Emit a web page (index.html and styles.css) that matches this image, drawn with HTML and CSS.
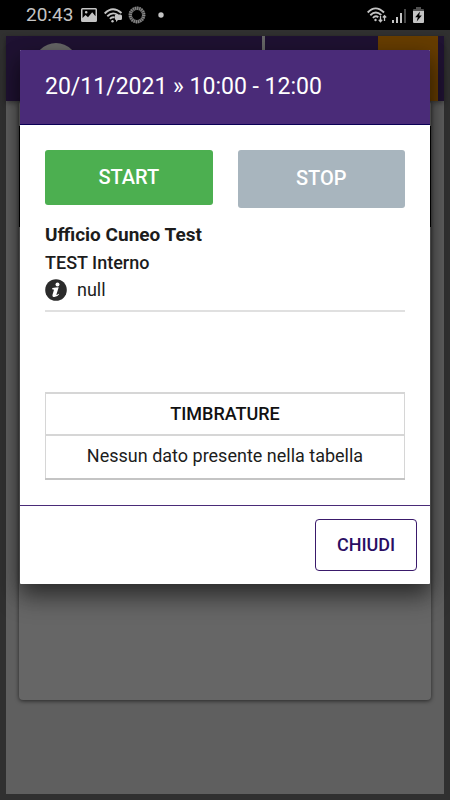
FILE: index.html
```html
<!DOCTYPE html>
<html lang="it">
<head>
<meta charset="utf-8">
<meta name="viewport" content="width=device-width, initial-scale=1">
<title>Timbrature</title>
<link rel="stylesheet" href="styles.css">
</head>
<body>
<header class="status">
  <span class="clock">20:43</span>
  <svg class="icon picture" viewBox="0 0 16 14" width="16" height="14" aria-hidden="true">
    <path fill="#c4c4c4" fill-rule="evenodd" d="M1.500 0h13Q16 0 16 1.500v11q0 1.500-1.500 1.500h-13Q0 14 0 12.500v-11Q0 0 1.500 0zM1.500 1.500v8.500l3-3 2.500 2.200 4.200-5 3.300 4V1.500zM5.200 3a1.300 1.300 0 1 1 0 2.600 1.300 1.300 0 0 1 0-2.600z"/>
  </svg>
  <svg class="icon wifi" viewBox="0 0 19 15" width="19" height="15" aria-hidden="true">
    <g fill="none" stroke="#c4c4c4" stroke-width="1.900">
      <path d="M.7 5.500Q8.500-2.800 17.500 5"/>
      <path d="M3.300 8.200q5.200-5 10.500-1.200"/>
      <path d="M5.900 10.900q2.300-2.500 4.700-1.400"/>
    </g>
    <circle cx="8.500" cy="13.200" r="1.200" fill="#c4c4c4"/>
    <path fill="#c4c4c4" d="M12 6.500h4.500q1.500 0 1.500 1.500v2.500q0 1.500-1.500 1.500H14l-2 2v-2q-1.200-.2-1.200-1.500V8q0-1.500 1.200-1.500z"/>
  </svg>
  <svg class="icon ring" viewBox="0 0 18 18" width="18" height="18" aria-hidden="true">
    <circle cx="9" cy="9" r="6.700" fill="none" stroke="#454545" stroke-width="3.400"/>
    <circle cx="9" cy="9" r="6.700" fill="none" stroke="#8c8c8c" stroke-width="3.400" stroke-dasharray="1 1.105"/>
  </svg>
  <svg class="icon dot" viewBox="0 0 6 6" width="6" height="6" aria-hidden="true"><circle cx="3" cy="3" r="2.700" fill="#c4c4c4"/></svg>
  <svg class="icon network" viewBox="0 0 20 16" width="20" height="16" aria-hidden="true">
    <g fill="none" stroke="#c4c4c4" stroke-width="1.900">
      <path d="M.7 5.500Q8.500-2.800 17 5.500"/>
      <path d="M3.300 8.200q5.300-5.200 11-.2"/>
      <path d="M5.900 10.900q2.700-2.800 5.400-.6"/>
    </g>
    <circle cx="8.500" cy="13" r="1.200" fill="#c4c4c4"/>
    <path d="M13.500 9v5.500M11.800 12.800l1.700 1.900 1.700-1.900M17.500 14V8.800M15.800 10.500l1.700-1.900 1.700 1.900" fill="none" stroke="#c4c4c4" stroke-width="1.300"/>
  </svg>
  <svg class="icon signal" viewBox="0 0 14 15" width="14" height="15" aria-hidden="true">
    <path fill="#c4c4c4" d="M0 12h2v3H0zM4 9h2v6H4zM8 5h2v10H8z"/><path fill="#484848" d="M12 1h2v14h-2z"/>
  </svg>
  <svg class="icon battery" viewBox="0 0 11 16" width="11" height="16" aria-hidden="true">
    <path fill="#505050" d="M3 0h5v2h2q1 0 1 1v2H0V3q0-1 1-1h2z"/><path fill="#c4c4c4" d="M0 4h11v11q0 1-1 1H1q-1 0-1-1z"/>
    <path fill="#000" d="M7 4.500 2.200 10.200h2.600L3.700 14.500 8.800 8.500H6.200z"/>
  </svg>
</header>
<div class="screen">
  <div class="page">
    <div class="topbar">
      <span class="avatar"></span>
      <span class="divider"></span>
      <span class="accent"></span>
    </div>
    <div class="card"><div class="card-head"></div></div>
  </div>
  <section class="dialog" role="dialog" aria-labelledby="title">
    <h1 class="title" id="title">20/11/2021 » 10:00 - 12:00</h1>
    <div class="content">
      <div class="actions">
        <button class="action start" type="button">START</button>
        <button class="action stop" type="button">STOP</button>
      </div>
      <h2 class="office">Ufficio Cuneo Test</h2>
      <p class="kind">TEST Interno</p>
      <p class="note">
        <svg viewBox="0 0 22 22" width="22" height="22" aria-hidden="true">
          <circle cx="11" cy="11" r="10.800" fill="#2b2b2b"/>
          <circle cx="12.500" cy="5.400" r="2" fill="#fff"/>
          <path fill="#fff" d="M7.400 9.100q3.500-.5 6.300-.8l-2.200 7q-.2.900.4.700.7-.3 1.500-1.300l.7.500q-1.900 2.900-4.700 2.900-2.400-.2-1.900-2.400l1.300-4.300q.3-.9-.4-1l-1.400-.1z"/>
        </svg>
        <span>null</span>
      </p>
      <table class="stamps">
        <thead><tr><th scope="col">TIMBRATURE</th></tr></thead>
        <tbody><tr><td>Nessun dato presente nella tabella</td></tr></tbody>
      </table>
    </div>
    <footer class="footer"><button class="close" type="button">CHIUDI</button></footer>
  </section>
</div>
</body>
</html>
```
FILE: styles.css
```css
* { box-sizing: border-box; }
body {
  margin: 0;
  min-height: 100vh;
  display: flex;
  flex-direction: column;
  background: #303030;
  color: #1c1c1c;
  font-family: Roboto, "Liberation Sans", sans-serif;
}
h1, h2, p { margin: 0; }

.status {
  display: flex;
  align-items: center;
  height: 30px;
  padding: 0 26px;
  background: #000;
}
.clock { color: #c4c4c4; font-size: 19px; line-height: 30px; }
.icon { flex: none; }
.picture { margin-left: 8px; }
.wifi { margin-left: 7px; }
.ring { margin-left: 5px; }
.dot { margin-left: 12px; }
.network { margin-left: auto; }
.signal { margin-left: 5px; }
.battery { margin-left: 7px; }

.screen {
  position: relative;
  flex: 1;
  display: flex;
  padding: 6px;
}
.page {
  flex: 1;
  display: flex;
  flex-direction: column;
  background: #5f5f5f;
}
.topbar {
  display: flex;
  height: 65px;
  padding: 0 6px 0 28px;
  background: #1f1232;
  box-shadow: 0 2px 5px rgba(0, 0, 0, 0.4);
}
.avatar {
  width: 44px;
  height: 44px;
  margin-top: 7px;
  border-radius: 50%;
  background: #666;
}
.divider { width: 3px; margin-left: auto; background: #666; }
.accent { width: 60px; margin-left: 113px; background: #663d00; }
.card {
  flex: 1;
  margin: 0 13px 94px;
  overflow: hidden;
  border-radius: 4px;
  background: #666;
  box-shadow: 0 1px 4px rgba(0, 0, 0, 0.6);
}
.card-head { height: 101px; margin-top: 25px; background: #000; }

.dialog {
  position: absolute;
  top: 20px;
  left: 20px;
  right: 20px;
  border-radius: 1px;
  overflow: hidden;
  background: #fff;
  box-shadow: 0 14px 24px rgba(0, 0, 0, 0.4), 0 6px 20px rgba(0, 0, 0, 0.3);
}
.title {
  padding: 21px 25px;
  border-bottom: 1px solid #0b0055;
  background: #4a2b78;
  color: #fff;
  font-size: 23px;
  font-weight: 400;
  line-height: 32px;
}
.content { padding: 25px; }
.actions {
  display: grid;
  grid-template-columns: 1fr 1fr;
  gap: 25px;
  align-items: start;
}
.action {
  height: 55px;
  padding: 0 6px 2px;
  border: 0;
  border-radius: 3px;
  color: #fff;
  font: 500 20px/28px Roboto, "Liberation Sans", sans-serif;
}
.start { background: #4caf50; }
.stop { height: 58px; background: #a8b5be; }
.office { margin-top: 13px; font-size: 19px; font-weight: 700; line-height: 28px; }
.kind { font-size: 18px; font-weight: 500; line-height: 28px; }
.note {
  display: flex;
  align-items: center;
  gap: 10px;
  height: 35px;
  padding-bottom: 8px;
  border-bottom: 2px solid #e0e0e0;
  font-size: 18px;
}
.stamps {
  width: 100%;
  margin-top: 80px;
  border-collapse: collapse;
  border: 1px solid #d6d6d6;
  border-top-width: 2px;
  border-bottom: 2px solid #c4c4c4;
  font-size: 18px;
  line-height: 24px;
  text-align: center;
}
.stamps th { padding: 8px; font-weight: 500; color: #111; }
.stamps td { padding: 8px 8px 10px; border-top: 2px solid #d6d6d6; }
.footer {
  display: flex;
  justify-content: flex-end;
  padding: 13px;
  border-top: 1px solid #4a2b78;
}
.close {
  width: 102px;
  height: 52px;
  padding: 0 6px 1px;
  border: 1px solid #3a1a6b;
  border-radius: 4px;
  background: #fff;
  color: #2a0e63;
  font: 500 18px/24px Roboto, "Liberation Sans", sans-serif;
}
```
